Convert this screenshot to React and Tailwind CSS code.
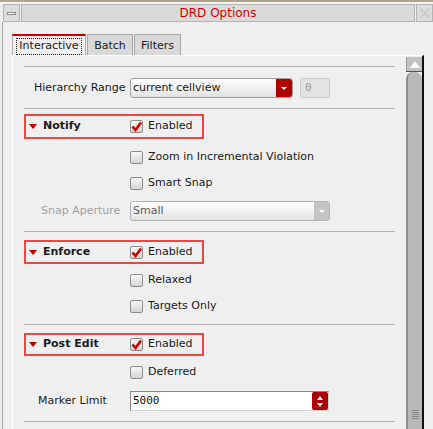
import React from 'react';

const Check = ({ checked }) => (
  <span className="relative w-[13px] h-[13px] shrink-0 rounded-[2px] border border-[#8e8e8e] bg-gradient-to-b from-[#f8f8f8] to-[#d4d4d4]">
    {checked && (
      <svg viewBox="0 0 13 13" className="absolute -left-px -top-px w-[13px] h-[13px]">
        <path d="M2.5 6.5 L5.5 10 L11 2.5" fill="none" stroke="#d20000" strokeWidth="2.6" strokeLinejoin="miter" />
      </svg>
    )}
  </span>
);

const CheckRow = ({ label, checked }) => (
  <div className="h-[26px] flex items-center pl-[106px] gap-[5px] text-[11px] text-[#1a1a1a]">
    <Check checked={checked} />
    <span>{label}</span>
  </div>
);

const Section = ({ title, className }) => (
  <div className={`w-[180px] border-2 border-[#ee4545] flex items-center ${className}`}>
    <div className="w-[104px] flex items-center">
      <span className="ml-[3px] w-0 h-0 border-l-[4px] border-r-[4px] border-t-[5px] border-l-transparent border-r-transparent border-t-[#c00000]" />
      <span className="ml-[6px] font-bold text-[11px] text-[#1a1a1a]">{title}</span>
    </div>
    <div className="flex items-center gap-[5px] text-[11px] text-[#1a1a1a]">
      <Check checked />
      <span>Enabled</span>
    </div>
  </div>
);

const Sep = ({ className }) => <div className={`w-[371px] h-px bg-[#b2b2b2] ${className}`} />;

export default function App() {
  return (
    <div className="w-[433px] h-[429px] overflow-hidden bg-[#efefef] flex flex-col font-['DejaVu_Sans',sans-serif]">
      <div className="h-[2px] bg-[#b3a68f]" />
      <div className="h-[2px] bg-[#f4f4f4]" />
      <div className="h-[18px] flex gap-px pl-[3px]">
        <div className="w-[17px] border border-[#b4b4b4] bg-[#dcdcdc] flex items-center justify-center">
          <span className="w-[9px] h-[3px] border border-[#8a8a8a] bg-white" />
        </div>
        <div className="flex-1 border border-[#b4b4b4] bg-[#dadada] flex items-center justify-center text-[12px] text-[#d40000]">
          DRD Options
        </div>
        <div className="w-[17px] border border-[#b4b4b4] bg-[#dcdcdc] flex items-center justify-center">
          <svg viewBox="0 0 12 12" className="w-[12px] h-[12px]">
            <path d="M2 2 L10 10 M10 2 L2 10" stroke="#c4c4c4" strokeWidth="2.5" strokeDasharray="1.5 1" />
          </svg>
        </div>
      </div>
      <div className="flex-1 flex flex-col border-l border-[#a5a5a5] ml-[2px] pt-[12px]">
        <div className="flex h-[21px] ml-[9px] text-[11px] text-[#1a1a1a]">
          <div className="w-[74px] border-t-2 border-t-[#cc0000] border-l border-r border-[#b0b0b0] bg-[#efefef] flex items-start justify-center pt-[2px]">
            <span className="w-[66px] h-[17px] border border-dotted border-[#222] flex items-center justify-center">Interactive</span>
          </div>
          <div className="w-[46px] ml-px border border-b-0 border-[#a8a8a8] bg-[#d9d9d9] flex items-center justify-center pt-[2px]">Batch</div>
          <div className="w-[47px] ml-px border border-b-0 border-[#a8a8a8] bg-[#d9d9d9] flex items-center justify-center pt-[2px]">Filters</div>
        </div>
        <div className="flex-1 ml-[9px] w-[412px] border-t border-l border-white border-r-2 border-r-[#111] flex">
          <div className="w-[393px] pl-[11px] flex flex-col">
            <Sep className="mt-[10px]" />
            <div className="mt-[11px] h-[20px] flex items-center text-[11px] text-[#1a1a1a]">
              <span className="w-[106px] pl-[10px]">Hierarchy Range</span>
              <div className="w-[163px] h-[20px] flex rounded-[3px] border border-[#a0a0a0] bg-gradient-to-b from-white to-[#e2e2e2] overflow-hidden">
                <span className="flex-1 pl-[2px] flex items-center">current cellview</span>
                <span className="w-[16px] bg-[#b00000] rounded-r-[2px] flex items-center justify-center">
                  <span className="w-0 h-0 border-l-[3px] border-r-[3px] border-t-[3px] border-l-transparent border-r-transparent border-t-white" />
                </span>
              </div>
              <div className="ml-[7px] w-[30px] h-[20px] rounded-[2px] border border-[#cdcdcd] bg-[#e3e3e3] flex items-center pl-[4px] font-['DejaVu_Sans_Mono',monospace] text-[11px] text-[#9a9a9a]">0</div>
            </div>
            <Sep className="mt-[10px]" />
            <Section title="Notify" className="mt-[5px] h-[25px]" />
            <div className="mt-[5px]">
              <CheckRow label="Zoom in Incremental Violation" />
              <CheckRow label="Smart Snap" />
            </div>
            <div className="mt-[5px] h-[20px] flex items-center text-[11px]">
              <span className="w-[106px] pl-[17px] text-[#a2a2a2]">Snap Aperture</span>
              <div className="w-[200px] h-[20px] flex rounded-[3px] border border-[#b4b4b4] bg-gradient-to-b from-white to-[#e4e4e4] overflow-hidden">
                <span className="flex-1 pl-[2px] flex items-center text-[#5a5a5a]">Small</span>
                <span className="w-[15px] bg-[#c4c4c4] flex items-center justify-center">
                  <span className="w-0 h-0 border-l-[3px] border-r-[3px] border-t-[3px] border-l-transparent border-r-transparent border-t-white" />
                </span>
              </div>
            </div>
            <Sep className="mt-[10px]" />
            <Section title="Enforce" className="mt-[8px] h-[24px]" />
            <div className="mt-[3px]">
              <CheckRow label="Relaxed" />
              <CheckRow label="Targets Only" />
            </div>
            <Sep className="mt-[5px]" />
            <Section title="Post Edit" className="mt-[8px] h-[23px]" />
            <div className="mt-[3px]">
              <CheckRow label="Deferred" />
            </div>
            <div className="mt-[6px] h-[20px] flex items-center text-[11px] text-[#1a1a1a]">
              <span className="w-[106px] pl-[14px]">Marker Limit</span>
              <div className="w-[199px] h-[20px] flex border border-[#8a8a8a] border-b-[#d0d0d0] border-r-[#d0d0d0] bg-white">
                <span className="flex-1 pl-[2px] flex items-center font-['DejaVu_Sans_Mono',monospace] text-[11px] text-[#111]">5000</span>
                <span className="w-[16px] bg-[#aa0000] rounded-[2px] flex flex-col items-center justify-center gap-[3px]">
                  <span className="w-0 h-0 border-l-[3.5px] border-r-[3.5px] border-b-[4px] border-l-transparent border-r-transparent border-b-white" />
                  <span className="w-0 h-0 border-l-[3.5px] border-r-[3.5px] border-t-[4px] border-l-transparent border-r-transparent border-t-white" />
                </span>
              </div>
            </div>
            <Sep className="mt-[10px]" />
          </div>
          <div className="w-[16px] mt-px flex flex-col">
            <div className="h-[14px] bg-[#c2c2c2] border-l border-[#9a9a9a] flex items-center justify-center">
              <span className="w-0 h-0 border-l-[5px] border-r-[5px] border-b-[7px] border-l-transparent border-r-transparent border-b-white" />
            </div>
            <div className="h-px bg-[#555]" />
            <div className="flex-1 rounded-t-[7px] bg-[#b8b8b8] border-l-2 border-[#8e8e8e] flex flex-col items-center justify-end pb-[10px]">
              <div className="flex flex-col gap-px">
                <span className="w-[7px] h-px bg-[#8a8a8a]" />
                <span className="w-[7px] h-px bg-[#8a8a8a]" />
                <span className="w-[7px] h-px bg-[#8a8a8a]" />
                <span className="w-[7px] h-px bg-[#8a8a8a]" />
                <span className="w-[7px] h-px bg-[#8a8a8a]" />
              </div>
            </div>
          </div>
        </div>
      </div>
    </div>
  );
}
